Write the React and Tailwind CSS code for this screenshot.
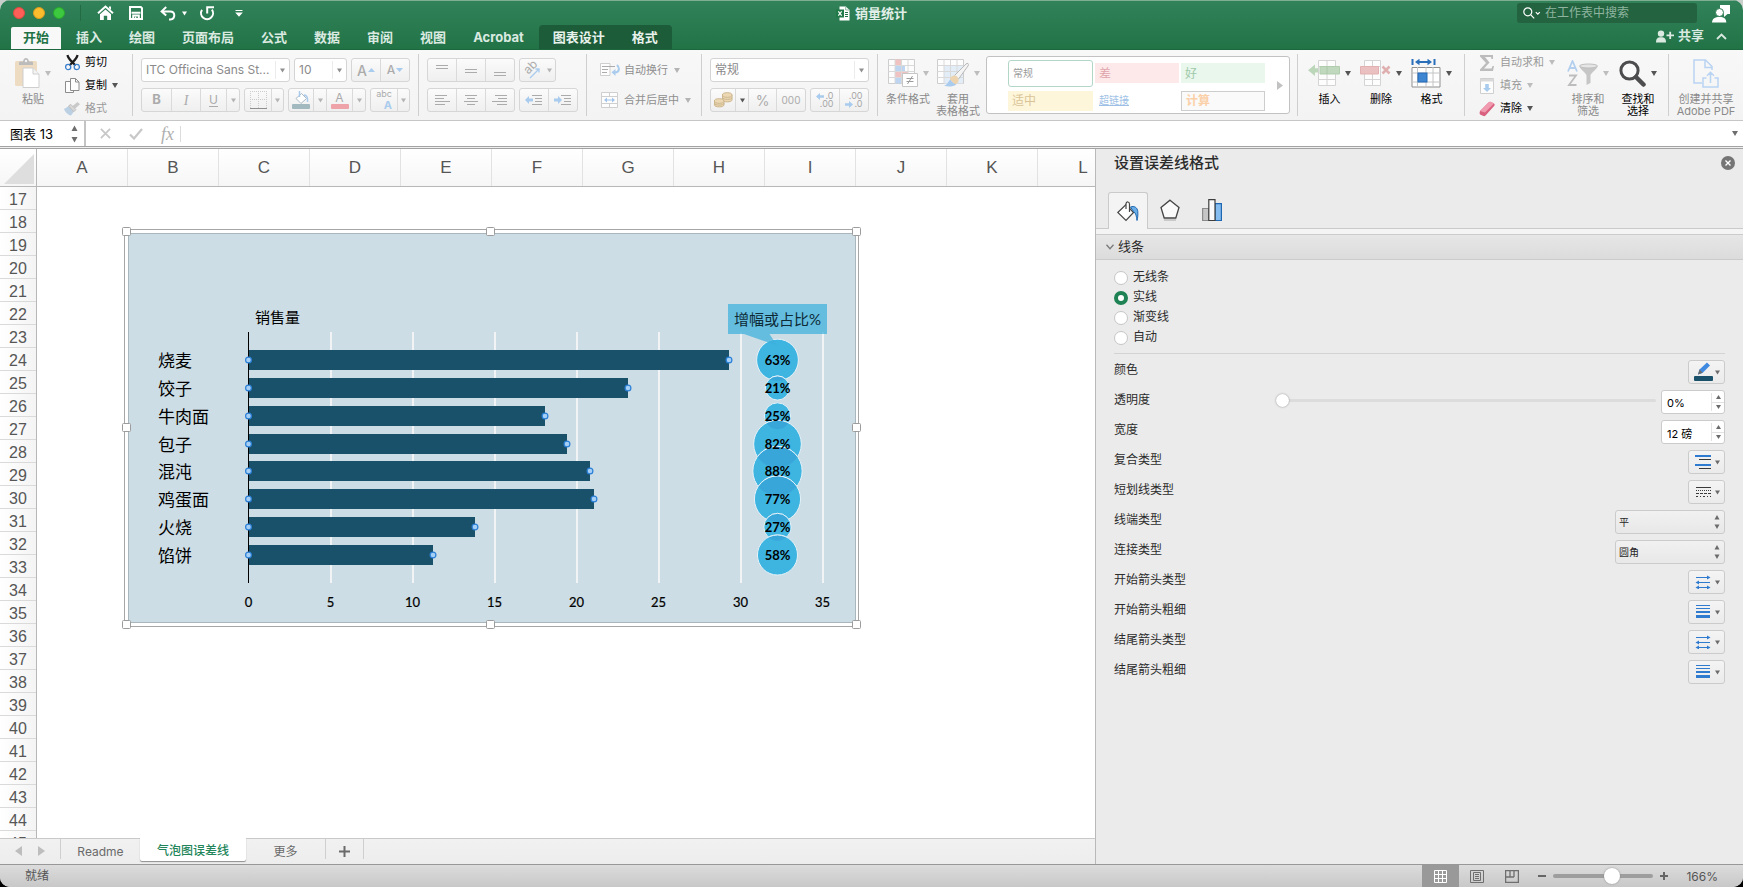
import React from 'react';

const Caret = ({ className = 'fill-[#b4b4b4]' }) => (
  <svg width="6" height="5" viewBox="0 0 6 5" className={'shrink-0 ' + className} aria-hidden="true">
    <path d="M0 0h6L3 5z" />
  </svg>
);

const Updown = () => (
  <svg width="6" height="14" viewBox="0 0 6 14" className="shrink-0 fill-[#6b6b6b]" aria-hidden="true">
    <path d="M3 0l2.5 4.5h-5zM3 14L.5 9.5h5z" />
  </svg>
);

const Sep = () => <div className="my-1 w-px shrink-0 bg-[#cfcfcf]" />;

const cellGroup =
  'flex h-6 shrink-0 items-stretch overflow-hidden rounded-[3px] border border-[#d6d6d6] bg-linear-to-b from-[#fbfbfb] to-[#efefef]';

const Cell = ({ label, w, children }) => (
  <button
    type="button"
    aria-label={label}
    className={'flex items-center justify-center gap-1 border-l border-[#dadada] text-[#ababab] first:border-l-0 ' + w}
  >
    {children}
  </button>
);

const Lines = ({ rows }) => (
  <svg width="16" height="14" viewBox="0 0 16 14" stroke="#ababab" fill="none" aria-hidden="true">
    {rows.map(([x1, x2, y], i) => (
      <path key={i} d={`M${x1} ${y}H${x2}`} />
    ))}
  </svg>
);

const Big = ({ icon, lines, active, caret = true }) => (
  <button type="button" className={'flex shrink-0 flex-col items-center pt-[5px] text-[11px] leading-3 ' + (active ? 'text-black' : 'text-[#8a8a8a]')}>
    <span className="mb-0.5 flex h-9 items-center gap-[5px]">
      {icon}
      {caret && <Caret className={active ? 'fill-[#555555]' : 'fill-[#bdbdbd]'} />}
    </span>
    {lines.map((l) => (
      <span key={l}>{l}</span>
    ))}
  </button>
);

const Small = ({ icon, text, active, caret }) => (
  <button type="button" className={'flex h-[23px] items-center gap-[5px] text-[11px] ' + (active ? 'text-black' : 'text-[#9a9a9a]')}>
    <span className="flex w-4 justify-center">{icon}</span>
    <span>{text}</span>
    {caret && <Caret className={active ? 'fill-[#555555]' : 'fill-[#bdbdbd]'} />}
  </button>
);

const TitleBar = () => (
  <header className="bg-linear-to-b from-[#32825a] to-[#217346] text-white">
    <div className="grid h-[25px] grid-cols-[1fr_auto_1fr] items-center border-t border-[#7fae93]">
      <div className="flex items-center pl-[13px]">
        <div className="flex gap-2 pr-[15px]">
          <button type="button" aria-label="关闭" className="size-3 rounded-full border border-[#df4a40] bg-[#fb5f57]" />
          <button type="button" aria-label="最小化" className="size-3 rounded-full border border-[#dc9a1f] bg-[#fbbc2e]" />
          <button type="button" aria-label="缩放" className="size-3 rounded-full border border-[#2aa72d] bg-[#3dc93f]" />
        </div>
        <div className="h-4 w-px bg-[#226b43]" />
        <button type="button" aria-label="主页" className="ml-4">
          <svg width="17" height="16" viewBox="0 0 17 16" fill="none">
            <path d="M1 8.3L8.5 1.6 16 8.3" stroke="#fff" strokeWidth="2" />
            <path d="M3 9.2L8.5 4.4 14 9.2V15h-3.8v-4.2H6.8V15H3zM12 1.5h2V5l-2-1.8z" fill="#fff" />
          </svg>
        </button>
        <button type="button" aria-label="保存" className="ml-[15px]">
          <svg width="14" height="14" viewBox="0 0 14 14" fill="none" stroke="#fff" strokeWidth="2">
            <path d="M1 1h10.8L13 2.2V13H1z" />
            <path d="M2.5 6.7h9M4.2 13V9.6h5.6V13" />
            <path d="M6.6 10.5V13" strokeWidth="1.4" />
          </svg>
        </button>
        <button type="button" aria-label="撤消" className="ml-[17px]">
          <svg width="16" height="15" viewBox="0 0 16 15" fill="none" stroke="#fff" strokeWidth="2">
            <path d="M6.2 1L1.6 5.4l4.6 4.2M2 5.4h8.2c5.4 0 5.4 7.6.2 8.2H9" />
          </svg>
        </button>
        <span className="ml-1.5"><Caret className="w-[5px] fill-white" /></span>
        <button type="button" aria-label="重做" className="ml-3">
          <svg width="16" height="16" viewBox="0 0 16 16" fill="none" stroke="#fff" strokeWidth="2">
            <path d="M12.9 4.6a6 6 0 1 1-9.9.3" />
            <path d="M8.2 8.6V2.2H15" />
          </svg>
        </button>
        <button type="button" aria-label="自定义工具栏" className="ml-5">
          <svg width="8" height="7" viewBox="0 0 8 7" fill="#fff">
            <path d="M.5 0h7v1h-7zM.2 2.4h7.6L4 6.8z" />
          </svg>
        </button>
      </div>
      <h1 className="flex items-center gap-[5px] text-[13px] font-bold leading-4 text-[#e2efe8]">
        <svg width="14" height="15" viewBox="0 0 14 15">
          <path d="M3.5.5h6.2L13.5 4v10.5h-10z" fill="#fff" />
          <path d="M9.7.5V4h3.8" fill="none" stroke="#8fb8a2" />
          <path d="M9 6.5h3M9 8.5h3M9 10.5h3" stroke="#217346" />
          <rect x="0" y="3.5" width="8" height="8" fill="#1f7a48" />
          <path d="M2.3 5.3l3.4 4.4M5.7 5.3L2.3 9.7" stroke="#fff" strokeWidth="1.2" />
        </svg>
        销量统计
      </h1>
      <div className="flex items-center justify-end gap-[15px] pr-3">
        <label className="flex h-5 w-[180px] items-center gap-1 rounded-[3px] bg-[#23633f] px-1.5">
          <svg width="18" height="13" viewBox="0 0 18 13" fill="none" stroke="#fff" strokeWidth="1.2" className="shrink-0">
            <circle cx="4.8" cy="4.8" r="4" />
            <path d="M7.8 7.8l3.4 3.6M12.8 5.2l2 2 2-2" />
          </svg>
          <input aria-label="搜索" placeholder="在工作表中搜索" className="min-w-0 flex-1 bg-transparent text-[12px] leading-4 text-white outline-none placeholder:text-[#8fb5a0]" />
        </label>
        <button type="button" aria-label="反馈">
          <svg width="19" height="19" viewBox="0 0 19 19" fill="#fff">
            <path d="M8 1h10v9h-2.5L12 13V9.5H8z" />
            <circle cx="7.5" cy="8.5" r="4" stroke="#2c7b50" />
            <path d="M0 18.5c.2-4 3-5.6 7.5-5.6s6.6 1.6 6.8 5.6z" />
          </svg>
        </button>
      </div>
    </div>
    <div className="flex h-[25px] items-end justify-between border-b border-[#1d673e]">
      <nav className="flex items-end gap-[3px] pl-[11px] text-[13px] font-bold leading-5 text-[#dbeae1]">
        <a href="#home" className="h-[22px] rounded-t-[2px] bg-[#f8f8f8] px-3 text-[#217346]">开始</a>
        {['插入', '绘图', '页面布局', '公式', '数据', '审阅', '视图', 'Acrobat'].map((t) => (
          <a key={t} href={'#' + t} className="h-[22px] px-3">{t}</a>
        ))}
        <span className="flex h-6 gap-[27px] rounded-t-[4px] bg-[#1c5c38] px-3.5 leading-6 text-[#e8f2ec]">
          <a href="#design">图表设计</a>
          <a href="#format">格式</a>
        </span>
      </nav>
      <div className="flex h-[22px] items-center gap-3 pb-1 pr-4 text-[13px] font-bold text-[#dbeae1]">
        <button type="button" className="flex items-center gap-1">
          <svg width="18" height="13" viewBox="0 0 18 13" fill="#dbeae1">
            <circle cx="5" cy="3.6" r="3.2" />
            <path d="M0 12.5c0-4 1.5-5.300 5-5.300s5 1.300 5 5.300z" />
            <path d="M10.5 4.500h2.800V1.800h1.800v2.700H18v1.800h-2.900V9h-1.800V6.300h-2.800z" />
          </svg>
          共享
        </button>
        <button type="button" aria-label="折叠功能区">
          <svg width="11" height="7" viewBox="0 0 11 7" fill="none" stroke="#dbeae1" strokeWidth="1.8">
            <path d="M1 6l4.5-4.5L10 6" />
          </svg>
        </button>
      </div>
    </div>
  </header>
);

const PasteIcon = () => (
  <svg width="25" height="31" viewBox="0 0 25 31">
    <rect x="0" y="3" width="22" height="25" rx="1.5" fill="#eedcc2" />
    <path d="M4 7V4.5q0-1 1-1h3Q8.5 0 11 0t3 3.500h3q1 0 1 1V7z" fill="#bcbcbc" />
    <circle cx="11" cy="3" r="1.2" fill="#f4f4f4" />
    <path d="M8 10h10l6 6v13.500H8z" fill="#fff" stroke="#cfcfcf" />
    <path d="M18 10v6h6" fill="#f4f4f4" stroke="#cfcfcf" />
  </svg>
);
const CutIcon = () => (
  <svg width="15" height="17" viewBox="0 0 15 17" fill="none">
    <path d="M2.5 1c.5 4 4 6 8 10.500M12.500 1c-.5 4-4 6-8 10.500" stroke="#1d1d1d" strokeWidth="2.2" />
    <circle cx="3.2" cy="13" r="2.6" stroke="#3b80cf" strokeWidth="1.3" />
    <circle cx="11.8" cy="13" r="2.6" stroke="#3b80cf" strokeWidth="1.3" />
  </svg>
);
const CopyIcon = () => (
  <svg width="15" height="16" viewBox="0 0 15 16" fill="#fdfdfd" stroke="#8c8c8c">
    <path d="M.5 3.500H6L8.500 6v8.500h-8z" />
    <path d="M5.500.5h5l3.500 3.500v8.500H5.500z" />
    <path d="M10.500.5V4H14" fill="none" />
  </svg>
);
const BrushIcon = () => (
  <svg width="16" height="14" viewBox="0 0 16 14">
    <path d="M0 7l5-3 5 5.500L7 13.500C4 13 1 10 0 7z" fill="#bcd0e4" />
    <path d="M4.500 4l2.300-1.600 5 5.300-2 2z" fill="#d8d8d8" stroke="#bdbdbd" />
    <path d="M8 4.500L13.500 0 16 2.300 10.700 7z" fill="#c9c9c9" />
  </svg>
);
const GridIcon = ({ w, children, over }) => (
  <svg width={w} height="28" viewBox={`0 0 ${w} 28`}>
    <path d="M.5.500h26v24H.5z" fill="#fdfdfd" stroke="#cdcdcd" />
    {children}
    <path d="M7 .5v24M13.500.5v24M20 .5v24M.5 6.500h26M.5 12.500h26M.5 18.500h26" stroke="#d9d9d9" fill="none" />
    {over}
  </svg>
);

const InsertIcon = () => (
  <svg width="32" height="28" viewBox="0 0 32 28">
    <path d="M10.500 1.500h17v25h-17zM19 1.500v25M10.500 7.500h17M10.500 20.500h17" fill="#fdfdfd" stroke="#d4d4d4" />
    <path d="M12 7.500h19.500v7.500H12z" fill="#c0d8bd" stroke="#b0cdad" />
    <path d="M19 7.500V15" stroke="#aac8a7" />
    <path d="M0 11.300L7 5.500v3.700h3v4.200H7V17z" fill="#bcd6ba" />
  </svg>
);
const DeleteIcon = () => (
  <svg width="31" height="28" viewBox="0 0 31 28">
    <path d="M4.500 1.500h16v25h-16zM12.500 1.500v25M4.500 7.500h16M4.500 20.500h16" fill="#fdfdfd" stroke="#d4d4d4" />
    <path d="M.5 7.500h18v7.500H.5z" fill="#ebc0c0" stroke="#e2b0b0" />
    <path d="M22.500 7.500l7 7M29.500 7.500l-7 7" stroke="#e0b0b0" strokeWidth="2.6" />
  </svg>
);
const FormatIcon = () => (
  <svg width="30" height="29" viewBox="0 0 30 29">
    <path d="M1.500 0v6M23.500 0v6" stroke="#2a6fba" strokeWidth="2" />
    <path d="M4 3l4.500-3.300v2.300h8V-.3L21 3l-4.500 3.300V4h-8v2.300z" fill="#2a6fba" />
    <path d="M1 8.500h28v19.500H1z" fill="#fff" stroke="#8f8f8f" />
    <path d="M6.500 8v20M15 8v20M22 8v20M1 14h28M1 23h28" stroke="#c4c4c4" />
    <rect x="7" y="14" width="9" height="9" fill="#3f86d2" stroke="#2569b3" />
  </svg>
);
const SortIcon = () => (
  <svg width="31" height="27" viewBox="0 0 31 27">
    <path d="M1 11.500L5.500 1l4.500 10.500M2.700 8h5.600" fill="none" stroke="#b4cfee" strokeWidth="1.8" />
    <path d="M2 15.500h7L2 25h7.500" fill="none" stroke="#bdbdbd" strokeWidth="1.8" />
    <path d="M12.500 6c0 3 7 7 7 9.500V25l4-2v-7.500c0-2.500 7-6.500 7-9.500z" fill="#c6c6c6" />
    <ellipse cx="21.5" cy="6" rx="9" ry="2" fill="#e6e6e6" stroke="#bebebe" />
  </svg>
);
const FindIcon = () => (
  <svg width="27" height="27" viewBox="0 0 27 27" fill="none">
    <circle cx="10.500" cy="10.500" r="8.600" stroke="#4d4d4f" strokeWidth="3" fill="#fafafa" />
    <path d="M17 17l7.500 7.500" stroke="#4d4d4f" strokeWidth="4.500" strokeLinecap="round" />
  </svg>
);
const PdfIcon = () => (
  <svg width="26" height="29" viewBox="0 0 26 29" fill="none" stroke="#b9d3f2" strokeWidth="1.500">
    <path d="M9 24H1V1h11.500L19 7.500V11" />
    <path d="M12 1v7.500h7" />
    <path d="M13.500 19H10v9h15v-9h-3.500M17.500 24V13.500M14 16.800l3.500-3.500 3.500 3.500" />
  </svg>
);

const DropBox = ({ label, value, w }) => (
  <div className={'relative flex h-6 shrink-0 items-center rounded-[3px] border border-[#d4d4d4] bg-white ' + w}>
    <select aria-label={label} defaultValue={value} className="h-full w-full appearance-none bg-transparent pl-1 pr-4 text-[12px] text-[#8a8a8a] outline-none">
      <option>{value}</option>
    </select>
    <span className="pointer-events-none absolute inset-y-0.5 right-0 flex w-[14px] items-center justify-center border-l border-[#ececec]">
      <Caret className="w-[5px] fill-[#8f8f8f]" />
    </span>
  </div>
);

const Decimal = ({ top, bottom, left }) => (
  <span className="flex flex-col text-[9px] leading-2 text-[#a8a8a8]">
    <span className="flex items-center justify-end gap-px">
      {left && <svg width="8" height="7" viewBox="0 0 8 7" fill="#a9cbed"><path d="M0 3.500L4 0v2.200h4v2.600H4V7z" /></svg>}
      {top}
    </span>
    <span className="flex items-center justify-end gap-px">
      {!left && <svg width="8" height="7" viewBox="0 0 8 7" fill="#a9cbed"><path d="M8 3.500L4 0v2.200H0v2.600h4V7z" /></svg>}
      {bottom}
    </span>
  </span>
);

const Indent = ({ right }) => (
  <svg width="18" height="12" viewBox="0 0 18 12">
    <path d={right ? 'M8 6L4 2v2.500H0v3h4V10z' : 'M0 6l4-4v2.500h4v3H4V10z'} fill="#a9cbed" />
    <path d="M7 1.500h10M10 4.500h7M10 7.500h7M7 10.500h10" stroke="#ababab" />
  </svg>
);

const Ribbon = () => (
  <div className="flex h-[71px] overflow-hidden border-b border-[#c6c6c6] bg-linear-to-b from-[#f8f8f8] to-[#f3f3f3]">
    <div className="flex w-[132px] shrink-0 gap-[13px] pl-[15px]">
      <Big icon={<PasteIcon />} lines={['粘贴']} />
      <div className="flex flex-col pt-px">
        <Small icon={<CutIcon />} text="剪切" active />
        <Small icon={<CopyIcon />} text="复制" active caret />
        <Small icon={<BrushIcon />} text="格式" />
      </div>
    </div>
    <Sep />
    <div className="flex shrink-0 flex-col gap-1.5 px-2 pt-2">
      <div className="flex gap-1">
        <DropBox label="字体" value="ITC Officina Sans St..." w="w-[149px]" />
        <DropBox label="字号" value="10" w="w-[53px]" />
        <div className={cellGroup}>
          <Cell label="增大字号" w="w-[28px] text-[14px] font-medium">A<svg width="7" height="4" viewBox="0 0 7 4" fill="#a9cbed" className="-ml-[3px]"><path d="M0 4h7L3.500 0z" /></svg></Cell>
          <Cell label="减小字号" w="w-[29px] text-[12px] font-medium">A<svg width="7" height="4" viewBox="0 0 7 4" fill="#a9cbed" className="-ml-[3px]"><path d="M0 0h7L3.500 4z" /></svg></Cell>
        </div>
      </div>
      <div className="flex gap-1">
        <div className={cellGroup}>
          <Cell label="加粗" w="w-[29px] text-[13px] font-bold">B</Cell>
          <Cell label="倾斜" w="w-[29px] font-['Liberation_Serif',serif] text-[14px] italic">I</Cell>
          <Cell label="下划线" w="w-[26px] text-[12px] underline underline-offset-2">U</Cell>
          <Cell label="下划线选项" w="w-[13px]"><Caret className="w-[5px] fill-[#b4b4b4]" /></Cell>
        </div>
        <div className={cellGroup}>
          <Cell label="边框" w="w-[26px]">
            <svg width="17" height="18" viewBox="0 0 17 18" fill="none" stroke="#cccccc">
              <path d="M0 .500h17M0 8.500h17M.5 0v17M8.500 0v17M16.500 0v17" strokeDasharray="1 1" />
              <path d="M0 17.500h17" stroke="#8f8f8f" />
            </svg>
          </Cell>
          <Cell label="边框选项" w="w-[12px]"><Caret className="w-[5px] fill-[#b4b4b4]" /></Cell>
        </div>
        <div className={cellGroup}>
          <Cell label="填充颜色" w="w-[24px]">
            <svg width="18" height="18" viewBox="0 0 18 18">
              <path d="M4 7.500L9.500 2.500l5 5-5.500 5z" fill="#fff" stroke="#a9b8c4" />
              <path d="M7.500 0v6M12 4c3 0 4 3 3.500 7" fill="none" stroke="#a9cbed" strokeWidth="1.500" />
              <rect y="13" width="18" height="5" rx="1" fill="#a3b9c0" />
            </svg>
          </Cell>
          <Cell label="填充颜色选项" w="w-[13px]"><Caret className="w-[5px] fill-[#b4b4b4]" /></Cell>
          <Cell label="字体颜色" w="w-[26px]">
            <span className="flex flex-col items-center text-[12px] leading-3">A<span className="h-[5px] w-[18px] rounded-[1px] bg-[#eda3a8]" /></span>
          </Cell>
          <Cell label="字体颜色选项" w="w-[13px]"><Caret className="w-[5px] fill-[#b4b4b4]" /></Cell>
        </div>
        <div className={cellGroup}>
          <Cell label="拼音" w="w-[26px]">
            <span className="flex flex-col text-[9px] leading-[10px]">abc<b className="text-right text-[11px] leading-3 text-[#a9cbed]">A</b></span>
          </Cell>
          <Cell label="拼音选项" w="w-[12px]"><Caret className="w-[5px] fill-[#b4b4b4]" /></Cell>
        </div>
      </div>
    </div>
    <Sep />
    <div className="flex shrink-0 flex-col gap-1.5 px-2 pt-2">
      <div className="flex gap-1">
        <div className={cellGroup}>
          <Cell label="顶端对齐" w="w-[28px]"><Lines rows={[[2, 14, 2.5], [2, 14, 5.5]]} /></Cell>
          <Cell label="垂直居中" w="w-[29px]"><Lines rows={[[2, 14, 6.5], [2, 14, 9.5]]} /></Cell>
          <Cell label="底端对齐" w="w-[29px]"><Lines rows={[[2, 14, 9.5], [2, 14, 12.5]]} /></Cell>
        </div>
        <div className={cellGroup}>
          <Cell label="方向" w="w-[35px]">
            <svg width="20" height="20" viewBox="0 0 20 20" className="overflow-visible">
              <text x="4" y="12" fontSize="12" fill="#ababab" transform="rotate(-45 8 12)">ab</text>
              <path d="M7 18l9-9M12.500 9H16v3.500" stroke="#a9cbed" strokeWidth="1.300" fill="none" />
            </svg>
            <Caret className="w-[5px] fill-[#b4b4b4]" />
          </Cell>
        </div>
      </div>
      <div className="flex gap-1">
        <div className={cellGroup}>
          <Cell label="左对齐" w="w-[28px]"><Lines rows={[[1, 13, 2.5], [1, 10, 5.5], [1, 16, 8.5], [1, 11, 11.5]]} /></Cell>
          <Cell label="居中" w="w-[29px]"><Lines rows={[[2, 14, 2.5], [4, 12, 5.5], [1, 15, 8.5], [4, 12, 11.5]]} /></Cell>
          <Cell label="右对齐" w="w-[29px]"><Lines rows={[[3, 15, 2.5], [6, 15, 5.5], [0, 15, 8.5], [5, 15, 11.5]]} /></Cell>
        </div>
        <div className={cellGroup}>
          <Cell label="减少缩进量" w="w-[28px]"><Indent /></Cell>
          <Cell label="增加缩进量" w="w-[29px]"><Indent right /></Cell>
        </div>
      </div>
    </div>
    <Sep />
    <div className="flex w-[114px] shrink-0 flex-col gap-1.5 pl-[13px] pt-2 text-[11px] text-[#8f8f8f]">
      <button type="button" className="flex h-6 items-center gap-1">
        <svg width="20" height="14" viewBox="0 0 20 14" fill="none">
          <path d="M.5.500h9.500v12H.5z" fill="#fdfdfd" stroke="#cfcfcf" />
          <path d="M2 3.500h13M2 6.500h6M2 9.500h5" stroke="#ababab" />
          <path d="M17 2c3 3 2.500 7-2 7.500" stroke="#a9cbed" strokeWidth="2" />
          <path d="M11.500 9.300L15.500 6v7z" fill="#a9cbed" />
        </svg>
        自动换行<span className="ml-0.5"><Caret /></span>
      </button>
      <button type="button" className="flex h-6 items-center gap-1">
        <svg width="20" height="17" viewBox="0 0 20 17" fill="none">
          <path d="M1.500.500h16v15h-16zM9.500.500v4M9.500 12v3.500M1.500 4.500h16M1.500 11.500h16" fill="#fdfdfd" stroke="#cfcfcf" />
          <path d="M4 8l3-2.500v2h5v-2L15 8l-3 2.500v-2H7v2z" fill="#a0c4ea" />
        </svg>
        合并后居中<span className="ml-0.5"><Caret /></span>
      </button>
    </div>
    <Sep />
    <div className="flex shrink-0 flex-col gap-1.5 px-2 pt-2">
      <DropBox label="数字格式" value="常规" w="w-[159px]" />
      <div className="flex gap-1">
        <div className={cellGroup}>
          <Cell label="货币" w="w-[24px]">
            <svg width="19" height="16" viewBox="0 0 19 16" fill="#ecd9b4" stroke="#cdb68e">
              <path d="M8.500 3v5c0 2.500 9.500 2.500 9.500 0V3" />
              <ellipse cx="13.200" cy="3" rx="4.800" ry="2.300" />
              <path d="M8.500 5.500c0 2.500 9.500 2.500 9.500 0" fill="none" />
              <path d="M.5 9v4c0 2.500 9.500 2.500 9.500 0V9" />
              <ellipse cx="5.200" cy="9" rx="4.800" ry="2.300" />
              <path d="M.5 11.200c0 2.500 9.500 2.500 9.500 0" fill="none" />
            </svg>
          </Cell>
          <Cell label="货币选项" w="w-[13px]"><Caret className="w-[5px] fill-[#555555]" /></Cell>
          <Cell label="百分比" w="w-[28px] text-[14px]">%</Cell>
          <Cell label="千位分隔" w="w-[29px] text-[10px]">000</Cell>
        </div>
        <div className={cellGroup}>
          <Cell label="增加小数位数" w="w-[28px]"><Decimal left top=".0" bottom=".00" /></Cell>
          <Cell label="减少小数位数" w="w-[29px]"><Decimal top=".00" bottom=".0" /></Cell>
        </div>
      </div>
    </div>
    <Sep />
    <div className="flex min-w-0 flex-1 gap-1.5 pl-2 pr-[7px]">
      <Big
        icon={
          <GridIcon
            w={30}
            over={
              <>
                <path d="M14.500 14.500h15v13h-15z" fill="#fff" stroke="#c6c6c6" />
                <path d="M18.500 19.500h7M18.500 22.500h7M24.500 17l-5 8" stroke="#9c9c9c" />
              </>
            }
          >
            <path d="M7 .5h6v6H7zM7 12.500h13v6H7z" fill="#f0c2c2" />
            <path d="M7 6.500h10v6H7zM7 18.500h6v6H7z" fill="#bdd5f0" />
          </GridIcon>
        }
        lines={['条件格式']}
      />
      <Big
        icon={
          <GridIcon
            w={32}
            over={
              <>
                <path d="M31 4.500q1 1 0 2.500L21.500 20l-4-3.500L29 5q1-1 2-.5z" fill="#f4f4f4" stroke="#b9b9b9" />
                <path d="M13 20c1-4 6-5 8-1s-2 6.500-4 6.500z" fill="#edd3ae" />
                <path d="M7 26.500c3 0 4-4 6.500-6 1 2.500 3.500 4.500 6 5-4 2.500-9 2.500-12.500 1z" fill="#a9cbed" />
              </>
            }
          >
            <path d="M7 6.500h19v18H7z" fill="#e3edf8" />
          </GridIcon>
        }
        lines={['套用', '表格格式']}
      />
      <div className="mt-1.5 flex h-[58px] min-w-0 flex-1 items-center justify-between rounded-[3px] border border-[#c2c2c2] bg-white pl-[21px] pr-1.5">
        <div className="grid grid-cols-[85px_84px_84px] items-center gap-x-0.5 gap-y-1 text-[12px]">
          <button type="button" className="h-[27px] rounded-[3px] border border-[#b3d7c7] pl-1 text-left text-[10px] text-[#9a9a9a]">常规</button>
          <button type="button" className="h-5 bg-[#fde9ea] pl-1 text-left leading-[17px] text-[#dfa5ab]">差</button>
          <button type="button" className="h-5 bg-[#e9f7ed] pl-1 text-left leading-[17px] text-[#9fc9a8]">好</button>
          <button type="button" className="h-5 bg-[#fef6da] pl-1 text-left leading-[17px] text-[#d9c498]">适中</button>
          <button type="button" className="h-5 pl-1 text-left text-[10px] text-[#9dbfe6] underline">超链接</button>
          <button type="button" className="h-5 border border-[#cdcdcd] bg-[#fafafa] pl-1 text-left font-bold leading-[15px] text-[#fbd0a8]">计算</button>
        </div>
        <button type="button" aria-label="更多样式">
          <svg width="6" height="9" viewBox="0 0 6 9" fill="#c2c2c2"><path d="M0 0v9l6-4.500z" /></svg>
        </button>
      </div>
    </div>
    <Sep />
    <div className="flex shrink-0 gap-[9px] pl-2.5 pr-3">
      <Big icon={<InsertIcon />} lines={['插入']} active />
      <Big icon={<DeleteIcon />} lines={['删除']} active />
      <Big icon={<FormatIcon />} lines={['格式']} active />
    </div>
    <Sep />
    <div className="flex w-[203px] shrink-0 gap-3 pl-3.5">
      <div className="flex flex-col pt-px">
        <Small icon={<svg width="14" height="16" viewBox="0 0 14 16"><path d="M0 0h13v4h-1.500L11 2H5l4.500 5.500L4 13.500h7.500L12.500 11H14l-1 5H0v-1.500L6 8 0 1.500z" fill="#bcbcbc" /></svg>} text="自动求和" caret />
        <Small icon={<svg width="14" height="16" viewBox="0 0 14 16"><path d="M.5.500h13v15H.5z" fill="#fdfdfd" stroke="#cfcfcf" /><path d="M.5 1h13v2.500H.5z" fill="#d9d9d9" /><path d="M7 14l-4-4h2.200V6h3.600v4H11z" fill="#a9cbed" /></svg>} text="填充" caret />
        <Small icon={<svg width="16" height="16" viewBox="0 0 16 16"><path d="M1 10L9.500 1.500Q10.500.500 12 1l3 1.500q1 .5.500 2L7 14q-1 1.500-2.500 1L1 13.500q-1-1 0-3.500z" fill="#d9607e" /><path d="M1 10L9.500 1.500Q10.500.500 12 1l3 1.500L6 11.500z" fill="#f09bb0" /></svg>} text="清除" active caret />
      </div>
      <div className="flex gap-2.5">
        <Big icon={<SortIcon />} lines={['排序和', '筛选']} />
        <Big icon={<FindIcon />} lines={['查找和', '选择']} active />
      </div>
    </div>
    <Sep />
    <div className="flex w-[74px] shrink-0 justify-center">
      <Big icon={<PdfIcon />} lines={['创建并共享', 'Adobe PDF']} caret={false} />
    </div>
  </div>
);

const FormulaBar = () => (
  <div className="flex h-[26px] items-center border-b border-[#a3a3a3] bg-white">
    <div className="flex h-full w-[86px] items-center justify-between border-r-2 border-[#c4c4c4] pl-2.5 pr-1.5">
      <input aria-label="名称框" defaultValue="图表 13" className="w-14 bg-transparent text-[13px] leading-4 text-black outline-none" />
      <svg width="7" height="18" viewBox="0 0 7 18" fill="#6e6e6e"><path d="M3.500 0.500L6.500 6h-6zM3.500 17.500L.5 12h6z" /></svg>
    </div>
    <div className="flex items-center gap-[18px] pl-3.5">
      <button type="button" aria-label="取消">
        <svg width="11" height="11" viewBox="0 0 12 12" stroke="#c8c8c8" strokeWidth="2"><path d="M1 1l10 10M11 1L1 11" /></svg>
      </button>
      <button type="button" aria-label="输入">
        <svg width="14" height="12" viewBox="0 0 14 12" fill="none" stroke="#c8c8c8" strokeWidth="2.200"><path d="M1 6.500l4 4L13 1" /></svg>
      </button>
      <button type="button" aria-label="插入函数" className="font-['Liberation_Serif',serif] text-[18px] italic leading-5 text-[#b0b0b0]">fx</button>
    </div>
    <div className="ml-1.5 h-4 w-px bg-[#dcdcdc]" />
    <input aria-label="编辑栏" className="h-full min-w-0 flex-1 bg-transparent px-2 outline-none" />
    <button type="button" aria-label="展开编辑栏" className="mr-[5px]"><Caret className="fill-[#6e6e6e]" /></button>
  </div>
);

const bars = [
  { name: '烧麦', y: 360, end: 729, pct: 63 },
  { name: '饺子', y: 388, end: 628, pct: 21 },
  { name: '牛肉面', y: 416, end: 545, pct: 25 },
  { name: '包子', y: 444, end: 567, pct: 82 },
  { name: '混沌', y: 471, end: 590, pct: 88 },
  { name: '鸡蛋面', y: 499, end: 594, pct: 77 },
  { name: '火烧', y: 527, end: 475, pct: 27 },
  { name: '馅饼', y: 555, end: 433, pct: 58 },
];
const handles = [126, 490, 856].flatMap((x) => [231, 427, 624].map((y) => [x, y])).filter(([x, y]) => !(x === 490 && y === 427));
const radius = (pct) => 2.63 * Math.sqrt(pct);

const Chart = () => (
  <svg width="740" height="404" viewBox="121 226 740 404" className="absolute left-[84px] top-[39px]" role="img" aria-label="销售量图表">
    <defs>
      {bars.slice(0, -1).map((b, i) => (
        <clipPath key={i} id={'bubble' + i}>
          <circle cx="777.5" cy={b.y} r={radius(b.pct)} />
        </clipPath>
      ))}
    </defs>
    <rect x="124.500" y="229.500" width="734" height="397" fill="#fff" stroke="#a6a6a6" />
    <rect x="128.500" y="233.500" width="727" height="389" fill="#cddde5" stroke="#a9b6bc" />
    {[331, 413, 495, 577, 659, 741, 823].map((x) => (
      <path key={x} d={`M${x} 332V583`} stroke="#f1f3f4" strokeWidth="2" />
    ))}
    <g fill="#19506a">
      {bars.map((b) => (
        <rect key={b.name} x="248" y={b.y - 10} width={b.end - 248} height="20" />
      ))}
    </g>
    <path d="M248.500 332V583" stroke="#000" />
    <g fill="#000" fontFamily="'Noto Sans CJK SC', sans-serif">
      <text x="255" y="323" fontSize="15">销售量</text>
      {bars.map((b) => (
        <text key={b.name} x="158" y={b.y + 7} fontSize="17">{b.name}</text>
      ))}
    </g>
    <g fill="#000" fontFamily="Lato, sans-serif" fontSize="13" textAnchor="middle">
      {[0, 5, 10, 15, 20, 25, 30, 35].map((n) => (
        <text key={n} x={248.5 + (n / 5) * 82} y="607" stroke="#000" strokeWidth=".2">{n}</text>
      ))}
    </g>
    {bars.map((b, i) => (
      <g key={b.name}>
        <circle cx="777.500" cy={b.y} r={radius(b.pct)} fill="#3eb4e0" stroke="#e6f2f8" />
        {i > 0 && (
          <circle cx="777.500" cy={b.y} r={radius(b.pct)} fill="#39a6da" stroke="#e6f2f8" clipPath={`url(#bubble${i - 1})`} />
        )}
      </g>
    ))}
    <path d="M728 304h99v30h-57.500l7.500 11.500L744 334h-16z" fill="#3cb0dd" fillOpacity=".72" />
    <text x="734" y="325" fontSize="15" fill="#0d2a36" fontFamily="Lato, 'Noto Sans CJK SC', sans-serif">增幅或占比%</text>
    <g fill="#000" fontFamily="Lato, sans-serif" fontSize="13" fontWeight="700" textAnchor="middle">
      {bars.map((b) => (
        <text key={b.name} x="777.5" y={b.y + 5}>{b.pct}%</text>
      ))}
    </g>
    <g fill="#a6cff5" stroke="#2a7fd6" strokeWidth="1.200">
      {bars.map((b) => (
        <React.Fragment key={b.name}>
          <circle cx="248.500" cy={b.y} r="2.900" />
          <circle cx={b.end} cy={b.y} r="2.900" />
        </React.Fragment>
      ))}
    </g>
    {handles.map(([x, y]) => (
      <rect key={x + '-' + y} x={x - 3.5} y={y - 3.5} width="8" height="8" rx="1" fill="#fff" stroke="#9c9c9c" />
    ))}
  </svg>
);

const Sheet = () => (
  <div className="flex min-h-0 flex-1 flex-col">
    <div className="flex h-[38px] shrink-0 overflow-hidden border-b border-[#b7b7b7] bg-linear-to-b from-white to-[#f6f6f6] font-['Liberation_Sans',Arial,sans-serif] text-[17px] text-[#565656]">
      <div className="flex w-[37px] shrink-0 items-end justify-end border-r border-[#b7b7b7] pb-0.5 pr-0.5">
        <svg width="30" height="30" viewBox="0 0 30 30"><path d="M30 0v30H0z" fill="#dedede" /></svg>
      </div>
      {'ABCDEFGHIJKL'.split('').map((c) => (
        <div key={c} className="flex w-[91px] shrink-0 items-center justify-center border-r border-[#e2e2e2]">{c}</div>
      ))}
    </div>
    <div className="flex min-h-0 flex-1 overflow-hidden">
      <div className="w-[37px] shrink-0 overflow-hidden border-r border-[#b7b7b7] bg-linear-to-r from-white to-[#f4f4f4] font-['Liberation_Sans',Arial,sans-serif] text-[16px] text-[#565656]">
        {Array.from({ length: 29 }, (_, i) => (
          <div key={i} className="h-[23px] border-b border-[#dadada] text-center leading-[25px]">{17 + i}</div>
        ))}
      </div>
      <div className="relative min-w-0 flex-1 overflow-hidden bg-white">
        <Chart />
      </div>
    </div>
    <div className="flex h-[26px] shrink-0 border-t border-[#c9c9c9] bg-linear-to-b from-[#f1f1f1] to-[#ededed] text-[12px] text-[#6a6a6a]">
      <div className="mb-[5px] flex w-[61px] items-center justify-center gap-4 border-r border-[#cfcfcf] pt-1">
        <button type="button" aria-label="上一个工作表"><svg width="7" height="10" viewBox="0 0 7 10" fill="#bdbdbd"><path d="M7 0v10L0 5z" /></svg></button>
        <button type="button" aria-label="下一个工作表"><svg width="7" height="10" viewBox="0 0 7 10" fill="#bdbdbd"><path d="M0 0v10l7-5z" /></svg></button>
      </div>
      <button type="button" className="w-[79px]">Readme</button>
      <button type="button" className="-mt-px mb-[3px] w-[106px] rounded-b-[2px] bg-white pt-[3px] font-medium text-[#22855a] shadow-[0_1px_1px_#8d8d8d]">气泡图误差线</button>
      <button type="button" className="mb-[5px] w-[80px] border-r border-[#cfcfcf] pt-1">更多</button>
      <button type="button" aria-label="新建工作表" className="mb-[5px] flex w-[38px] items-center justify-center border-r border-[#cfcfcf] pt-1">
        <svg width="11" height="11" viewBox="0 0 11 11" stroke="#6a6a6a" strokeWidth="2"><path d="M5.500 0v11M0 5.500h11" /></svg>
      </button>
    </div>
  </div>
);

const ctl = 'flex h-6 items-center rounded-[3px] border border-[#cbcbcb]';

const IconButton = ({ id, children }) => (
  <button id={id} type="button" className={ctl + ' w-[37px] justify-between bg-linear-to-b from-[#f4f4f4] to-[#ebebeb] pl-[5px] pr-1'}>
    {children}
    <Caret className="w-[5px] fill-[#6b6b6b]" />
  </button>
);

const ValueBox = ({ id, label, value }) => (
  <div className={ctl + ' w-[64px] bg-white'}>
    <input id={id} aria-label={label} defaultValue={value} className="h-full w-[49px] min-w-0 bg-transparent pl-[5px] pt-0.5 text-[11px] leading-4 text-black outline-none" />
    <div className="flex h-[18px] flex-1 flex-col border-l border-[#e2e2e2]">
      <button type="button" aria-label="增加" className="flex flex-1 items-center justify-center border-b border-[#e2e2e2]">
        <svg width="5" height="4" viewBox="0 0 5 4" fill="#6b6b6b"><path d="M0 4h5L2.500 0z" /></svg>
      </button>
      <button type="button" aria-label="减少" className="flex flex-1 items-center justify-center">
        <svg width="5" height="4" viewBox="0 0 5 4" fill="#6b6b6b"><path d="M0 0h5L2.500 4z" /></svg>
      </button>
    </div>
  </div>
);

const PanelSelect = ({ id, value }) => (
  <div className={ctl + ' relative w-[110px] bg-linear-to-b from-[#f1f1f1] to-[#e8e8e8]'}>
    <select id={id} defaultValue={value} className="h-full w-full appearance-none bg-transparent pl-[3px] pr-4 text-[10px] text-[#262626] outline-none">
      <option>{value}</option>
    </select>
    <span className="pointer-events-none absolute inset-y-0 right-1 flex items-center"><Updown /></span>
  </div>
);

const Row = ({ id, label, children }) => (
  <div className="flex h-[30px] items-center justify-between">
    <label htmlFor={id} className="w-[160px] shrink-0 pb-1">{label}</label>
    {children}
  </div>
);

const ArrowLines = () => (
  <svg width="18" height="14" viewBox="0 0 18 14" stroke="#2f7bd0" fill="#2f7bd0">
    <path d="M2 2.500h13M3 7.500h13M3 12.500h12" />
    <path d="M13 .500L16.500 2.500 13 4.500zM5 5.500L1.500 7.500 5 9.500zM5 10.500l-3.500 2 3.500 2zM13 10.500l3.500 2-3.500 2z" stroke="none" />
  </svg>
);
const WeightLines = () => (
  <svg width="18" height="14" viewBox="0 0 18 14" fill="#2f7bd0">
    <path d="M2 0h14v1H2zM2 3h14v1H2zM2 6h14v2H2zM2 10h14v3H2z" />
  </svg>
);

const Panel = () => (
  <aside className="w-[648px] shrink-0 border-l border-[#b9b9b9] bg-[#ebebeb] text-[12px] text-[#2c2c2c]">
    <div className="flex h-[43px] items-start justify-between pl-[18px] pr-2 pt-1">
      <h2 className="text-[15px] font-medium leading-5">设置误差线格式</h2>
      <button type="button" aria-label="关闭窗格" className="mt-[3px]">
        <svg width="14" height="14" viewBox="0 0 14 14"><circle cx="7" cy="7" r="7" fill="#757575" /><path d="M4.500 4.500l5 5M9.500 4.500l-5 5" stroke="#fff" strokeWidth="1.400" /></svg>
      </button>
    </div>
    <div className="flex h-[37px] items-stretch border-b border-[#cacaca] pl-3">
      <button type="button" aria-label="填充与线条" className="-mb-px flex w-10 items-center justify-center rounded-t-[3px] border border-b-0 border-[#cacaca] bg-[#f4f4f4]">
        <svg width="22" height="21" viewBox="0 0 22 21" fill="none">
          <path d="M.8 11.500L9 3.500l7.500 8L9 19.500z" fill="#fff" stroke="#454545" strokeWidth="1.200" />
          <path d="M9 8V3Q9.200.700 11 1q1.600.300 1.500 2.500V11" fill="#fff" stroke="#454545" strokeWidth="1.200" />
          <path d="M13.500 6c3.500-1.500 7 .5 7.300 4.500.2 3.500 0 6-.8 9-.5-4-1-7.500-3.500-9z" fill="#69aee8" stroke="#1f67b0" />
        </svg>
      </button>
      <button type="button" aria-label="效果" className="flex w-[43px] items-center justify-center">
        <svg width="20" height="22" viewBox="0 0 20 22">
          <path d="M4 20h12v2H4z" fill="#c9c9c9" />
          <path d="M10 1.200L19 8.500 15.800 19H4.200L1 8.500z" fill="#fafafa" stroke="#454545" strokeWidth="1.300" />
        </svg>
      </button>
      <button type="button" aria-label="误差线选项" className="flex w-[41px] items-center justify-center">
        <svg width="20" height="22" viewBox="0 0 20 22">
          <path d="M.6 9.500h6v12h-6z" fill="#c6c6c6" stroke="#8b8b8b" strokeWidth="1.200" />
          <path d="M13 4.600h6.400v16.900H13z" fill="#86bdf0" stroke="#1f67b0" strokeWidth="1.200" />
          <path d="M6.800.600h6.200v20.900H6.800z" fill="#fafafa" stroke="#3d3d3d" strokeWidth="1.200" />
        </svg>
      </button>
    </div>
    <div className="h-[5px] bg-[#f4f4f4]" />
    <button type="button" className="flex h-[26px] w-full items-center gap-1 border-y border-[#cbcbcb] bg-linear-to-b from-[#e6e6e6] to-[#dcdcdc] pl-2.5 text-[13px]">
      <svg width="8" height="6" viewBox="0 0 8 6" fill="none" stroke="#7a7a7a" strokeWidth="1.300"><path d="M.5.800L4 4.800 7.500.800" /></svg>
      线条
    </button>
    <fieldset className="mx-[18px] border-b border-[#d3d3d3] pb-1.5 pt-[7px]">
      {['无线条', '实线', '渐变线', '自动'].map((t, i) => (
        <label key={t} className="flex h-5 items-center gap-[5px]">
          <input type="radio" name="line" defaultChecked={i === 1} className="mt-0.5 size-3.5 appearance-none rounded-full border border-[#c6c6c6] bg-white checked:border-4 checked:border-[#1f8254]" />
          {t}
        </label>
      ))}
    </fieldset>
    <div className="mx-[18px] flex flex-col pt-[3px]">
      <Row id="p-color" label="颜色">
        <IconButton id="p-color">
          <svg width="20" height="20" viewBox="0 0 20 20">
            <path d="M4 12.500l1.500-5L13 .500l3 3-7.500 7.500z" fill="#3f8ae0" />
            <path d="M4 12.500l1.500-5 3.200 3.200z" fill="#6a6a6a" />
            <rect y="14" width="19" height="5" rx="1" fill="#19506a" />
          </svg>
        </IconButton>
      </Row>
      <Row id="p-alpha" label="透明度">
        <input
          id="p-alpha"
          type="range"
          defaultValue="0"
          className="mb-1 ml-auto mr-[5px] h-4 w-[380px] appearance-none bg-transparent [&::-webkit-slider-runnable-track]:h-[3px] [&::-webkit-slider-runnable-track]:rounded-full [&::-webkit-slider-runnable-track]:bg-[#dcdcdc] [&::-webkit-slider-thumb]:-mt-[5px] [&::-webkit-slider-thumb]:size-[13px] [&::-webkit-slider-thumb]:appearance-none [&::-webkit-slider-thumb]:rounded-full [&::-webkit-slider-thumb]:bg-white [&::-webkit-slider-thumb]:shadow-[0_0_2px_#888888]"
        />
        <ValueBox id="p-alpha-value" label="透明度数值" value="0%" />
      </Row>
      <Row id="p-width" label="宽度"><ValueBox id="p-width" value="12 磅" /></Row>
      <Row id="p-compound" label="复合类型">
        <IconButton id="p-compound">
          <svg width="18" height="15" viewBox="0 0 18 15"><path d="M1 0h16v2H1zM1 9h16v2H1z" fill="#2f7bd0" /><path d="M5 4.500h12M5 13.500h12" stroke="#3a3a3a" /></svg>
        </IconButton>
      </Row>
      <Row id="p-dash" label="短划线类型">
        <IconButton id="p-dash">
          <svg width="18" height="12" viewBox="0 0 18 12" stroke="#3a3a3a" fill="none">
            <path d="M2 1.500h15" /><path d="M2 4.500h15" strokeDasharray="1 1" /><path d="M2 7.500h15" strokeDasharray="3 1" /><path d="M2 10.500h15" strokeDasharray="2 2 1 2" />
          </svg>
        </IconButton>
      </Row>
      <Row id="p-cap" label="线端类型"><PanelSelect id="p-cap" value="平" /></Row>
      <Row id="p-join" label="连接类型"><PanelSelect id="p-join" value="圆角" /></Row>
      <Row id="p-bt" label="开始箭头类型"><IconButton id="p-bt"><ArrowLines /></IconButton></Row>
      <Row id="p-bs" label="开始箭头粗细"><IconButton id="p-bs"><WeightLines /></IconButton></Row>
      <Row id="p-et" label="结尾箭头类型"><IconButton id="p-et"><ArrowLines /></IconButton></Row>
      <Row id="p-es" label="结尾箭头粗细"><IconButton id="p-es"><WeightLines /></IconButton></Row>
    </div>
  </aside>
);

const StatusBar = () => (
  <footer className="flex h-[23px] shrink-0 items-stretch justify-between border-t border-[#989898] bg-linear-to-b from-[#dcdcdc] to-[#c8c8c8] pl-[25px] pr-[25px] text-[12px] leading-[21px] text-[#555555]">
    <span>就绪</span>
    <div className="flex items-center">
      <button type="button" aria-label="普通视图" className="flex h-full w-[37px] items-center justify-center bg-[#999999]">
        <svg width="13" height="13" viewBox="0 0 13 13" fill="none" stroke="#fff"><path d="M.5.500h12v12H.5zM4.500.500v12M8.500.500v12M.5 4.500h12M.5 8.500h12" /></svg>
      </button>
      <button type="button" aria-label="页面布局视图" className="ml-[11px]">
        <svg width="14" height="13" viewBox="0 0 14 13" fill="none" stroke="#6f6f6f"><path d="M.5.500h13v12H.5z" /><path d="M3.500 2.500h7v8h-7zM5 4.500h4M5 6.500h4M5 8.500h4" /></svg>
      </button>
      <button type="button" aria-label="分页预览" className="ml-[21px]">
        <svg width="14" height="13" viewBox="0 0 14 13" fill="none" stroke="#6f6f6f" strokeWidth="1.300"><path d="M.6.600h12.800v11.800H.6zM5 .5v6M9 .5v6.500M.6 7H9" /></svg>
      </button>
      <button type="button" aria-label="缩小" className="ml-[19px]"><svg width="8" height="8" viewBox="0 0 8 8" stroke="#666666" strokeWidth="2"><path d="M0 4h8" /></svg></button>
      <input
        type="range"
        aria-label="缩放"
        min="0"
        max="100"
        defaultValue="60"
        className="mx-[7px] h-4 w-[100px] appearance-none bg-transparent [&::-webkit-slider-runnable-track]:h-1 [&::-webkit-slider-runnable-track]:rounded-full [&::-webkit-slider-runnable-track]:bg-[#9d9d9d] [&::-webkit-slider-thumb]:-mt-1.5 [&::-webkit-slider-thumb]:size-4 [&::-webkit-slider-thumb]:appearance-none [&::-webkit-slider-thumb]:rounded-full [&::-webkit-slider-thumb]:bg-white [&::-webkit-slider-thumb]:shadow-[0_0_2px_#888888]"
      />
      <button type="button" aria-label="放大"><svg width="8" height="8" viewBox="0 0 8 8" stroke="#666666" strokeWidth="2"><path d="M0 4h8M4 0v8" /></svg></button>
      <span className="ml-[18px]">166%</span>
    </div>
  </footer>
);

export default function App() {
  return (
    <div className="h-screen bg-black font-['Inter','Noto_Sans_CJK_SC',sans-serif]">
      <div className="h-full bg-linear-to-b from-[#c9d0cb] from-50% to-black to-50%">
        <div className="flex h-full flex-col overflow-hidden rounded-[10px] bg-[#ebebeb]">
          <TitleBar />
          <Ribbon />
          <FormulaBar />
          <div className="h-[2px] shrink-0 border-b border-[#a3a3a3] bg-[#f0f0f0]" />
          <main className="flex min-h-0 flex-1">
            <div className="flex min-w-0 flex-1 flex-col">
              <Sheet />
            </div>
            <Panel />
          </main>
          <StatusBar />
        </div>
      </div>
    </div>
  );
}
